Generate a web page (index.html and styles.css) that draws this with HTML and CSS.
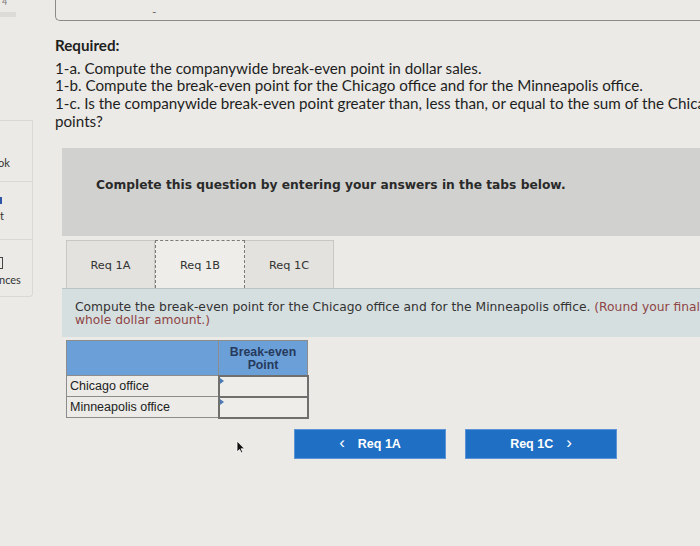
FILE: index.html
```html
<!DOCTYPE html>
<html>
<head>
<meta charset="utf-8">
<link rel="stylesheet" href="styles.css">
</head>
<body>
<div class="page">
  <aside class="sidebar">
    <div class="side-top"><span class="side-num">4</span><div class="side-bar"></div></div>
    <div class="side-panel p1"><span class="side-label">ok</span></div>
    <div class="side-panel p2"><span class="side-icon blue"></span><span class="side-label">t</span></div>
    <div class="side-panel p3"><span class="side-icon box"></span><span class="side-label">nces</span></div>
  </aside>
  <main class="main">
    <div class="top-box"><span class="dash">-</span></div>
    <section class="required">
      <p class="req-title">Required:</p>
      <p>1-a. Compute the companywide break-even point in dollar sales.</p>
      <p>1-b. Compute the break-even point for the Chicago office and for the Minneapolis office.</p>
      <p>1-c. Is the companywide break-even point greater than, less than, or equal to the sum of the Chicago and Minneapolis break-even</p>
      <p>points?</p>
    </section>
    <section class="question">
      <div class="banner">Complete this question by entering your answers in the tabs below.</div>
      <div class="tabs">
        <div class="tab">Req 1A</div>
        <div class="tab active">Req 1B</div>
        <div class="tab">Req 1C</div>
      </div>
      <div class="instruction">Compute the break-even point for the Chicago office and for the Minneapolis office. <span class="note">(Round your final answer to the nearest</span><br><span class="note">whole dollar amount.)</span></div>
      <table class="grid">
        <tr class="head">
          <th class="c1"></th>
          <th class="c2">Break-even<br>Point</th>
        </tr>
        <tr>
          <td class="label">Chicago office</td>
          <td class="input"><span class="mark"></span></td>
        </tr>
        <tr>
          <td class="label">Minneapolis office</td>
          <td class="input"><span class="mark"></span></td>
        </tr>
      </table>
      <div class="nav">
        <span class="cursor">
          <svg width="10" height="14" viewBox="0 0 10 14"><path d="M1 1 L1 12 L3.5 9.5 L5.5 13 L7 12.3 L5 8.8 L8.5 8.8 Z" fill="#111" stroke="#fff" stroke-width="0.8"/></svg>
        </span>
        <button class="btn prev"><span class="chev">&lsaquo;</span>Req 1A</button>
        <button class="btn next">Req 1C<span class="chev">&rsaquo;</span></button>
      </div>
    </section>
  </main>
</div>
</body>
</html>
```

FILE: styles.css
```css
html, body {
  margin: 0;
  padding: 0;
}
body {
  width: 700px;
  height: 546px;
  overflow: hidden;
  background: #ebeae6;
  font-family: "Lato", "Liberation Sans", sans-serif;
  color: #1e1e1e;
}
.page {
  display: flex;
  height: 546px;
}
.sidebar {
  width: 33px;
  flex: none;
  display: flex;
  flex-direction: column;
}
.side-top {
  height: 30px;
  position: relative;
}
.side-num {
  font-size: 9px;
  color: #777;
  position: absolute;
  left: 2px;
  top: -4px;
}
.side-bar {
  position: absolute;
  left: 0;
  top: 12px;
  width: 16px;
  height: 5px;
  background: #dcdbd7;
}
.side-panel {
  border: 1px solid #d9d8d4;
  border-left: none;
  background: #ebeae6;
  position: relative;
  font-family: "Lato", sans-serif;
  font-size: 11px;
  color: #333;
}
.p1 { margin-top: 90px; height: 60px; }
.p2 { height: 57px; border-top: none; }
.p3 { height: 56px; border-top: none; border-radius: 0 0 4px 0; }
.side-label {
  position: absolute;
  left: -1px;
  bottom: 8px;
}
.p1 .side-label { bottom: 12px; left: -2px; }
.p2 .side-label { bottom: 17px; left: 0; }
.p3 .side-label { bottom: 10px; left: -1px; }
.side-icon {
  position: absolute;
  left: -3px;
}
.side-icon.blue {
  top: 15px;
  width: 5px;
  height: 7px;
  background: #2f56a6;
}
.side-icon.box {
  top: 17px;
  width: 5px;
  height: 10px;
  border: 1px solid #444;
  border-left: none;
}
.main {
  flex: 1;
  margin-left: 22px;
  display: flex;
  flex-direction: column;
  min-width: 0;
}
.top-box {
  height: 20px;
  border: 1px solid #8a8a88;
  border-top: none;
  border-right: none;
  border-radius: 0 0 0 5px;
  position: relative;
}
.dash {
  position: absolute;
  left: 96px;
  top: 4px;
  font-size: 12px;
  color: #666;
}
.required {
  margin-top: 16px;
  font-size: 15.2px;
  line-height: 17.7px;
}
.required p {
  margin: 0;
  white-space: nowrap;
}
.req-title {
  font-weight: 700;
  margin-bottom: 5px !important;
}
.question {
  margin-top: 17px;
  margin-left: 7px;
  display: flex;
  flex-direction: column;
  align-items: flex-start;
}
.banner {
  align-self: stretch;
  background: #d1d1cf;
  height: 88px;
  box-sizing: border-box;
  padding: 30px 0 0 34px;
  font-family: "DejaVu Sans", Verdana, sans-serif;
  font-weight: 700;
  font-size: 12.25px;
  color: #2a2a2a;
  white-space: nowrap;
}
.tabs {
  display: flex;
  margin-top: 4px;
  margin-left: 4px;
}
.tab {
  width: 89px;
  height: 48px;
  box-sizing: border-box;
  background: #e3e2de;
  border: 1px solid #c8c7c3;
  border-bottom: none;
  font-family: "DejaVu Sans", Verdana, sans-serif;
  font-size: 11.3px;
  color: #333;
  text-align: center;
  line-height: 50px;
}
.tab + .tab { border-left: none; }
.tab.active {
  background: #eeede9;
  border: 1px dashed #7a7a78;
  border-bottom: none;
  width: 90px;
}
.instruction {
  align-self: stretch;
  background: #d6dfe0;
  height: 49px;
  box-sizing: border-box;
  border-top: 1px solid #b9c4c6;
  padding: 12px 0 0 13px;
  font-family: "DejaVu Sans", Verdana, sans-serif;
  font-size: 12.3px;
  line-height: 13px;
  color: #333;
  white-space: nowrap;
  overflow: hidden;
}
.note { color: #8e4545; }
.grid {
  margin: 3px 0 0 4px;
  border-collapse: collapse;
  font-family: "Liberation Sans", Arial, sans-serif;
}
.grid th, .grid td {
  padding: 0;
  border: 1px solid #8c8c8a;
}
.head th {
  background: #6b9fd8;
  height: 29px;
}
.c1 { width: 151px; }
.c2 {
  width: 88px;
  font-family: "Liberation Sans", Arial, sans-serif;
  font-size: 12.3px;
  line-height: 13.5px;
  font-weight: 700;
  color: #263a5c;
  vertical-align: top;
  padding-top: 5px !important;
}
.label {
  font-size: 12.5px;
  height: 20px;
  padding-left: 3px !important;
  color: #222;
  background: #ecebe7;
}
.input {
  position: relative;
  border: 2px solid #6f6f6d !important;
  background: #eeede9;
}
.mark {
  position: absolute;
  left: 0;
  top: 1px;
  width: 0;
  height: 0;
  border-top: 3px solid transparent;
  border-bottom: 3px solid transparent;
  border-left: 4px solid #4b7ab5;
}
.nav {
  display: flex;
  margin-top: 10px;
  margin-left: 232px;
  gap: 19px;
  position: relative;
}
.cursor {
  position: absolute;
  left: -58px;
  top: 9px;
}
.btn {
  width: 152px;
  height: 30px;
  background: #1f6fc4;
  border: 1px solid #5c93d4;
  color: #fff;
  font-family: "Liberation Sans", Arial, sans-serif;
  font-weight: 700;
  font-size: 12.5px;
  display: flex;
  align-items: center;
  justify-content: center;
  gap: 13px;
  padding: 0;
}
.chev {
  font-size: 17px;
  font-weight: 400;
  line-height: 1;
  margin-top: -2px;
}
```
